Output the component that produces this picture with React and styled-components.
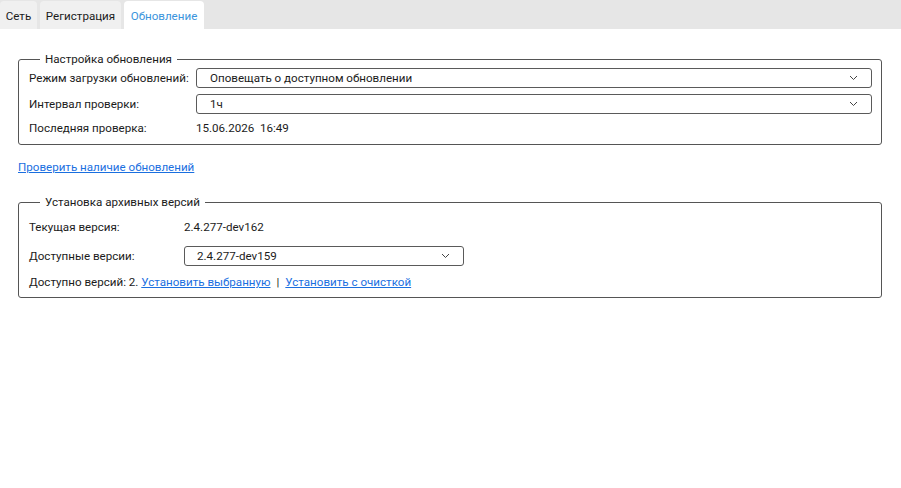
import React, { useState } from "react";
import styled, { createGlobalStyle } from "styled-components";

const Global = createGlobalStyle`
  html, body {
    margin: 0;
    padding: 0;
    background: #ffffff;
  }
  body {
    font-family: Roboto, "Noto Sans", sans-serif;
    font-size: 11.6px;
    color: #1b1b1b;
  }
`;

const TabBar = styled.div`
  display: flex;
  align-items: flex-end;
  gap: 3px;
  height: 29px;
  background: #e6e6e6;
`;

const Tab = styled.button`
  width: ${(p) => p.$w}px;
  height: 28px;
  padding: 1px 0 0;
  border: none;
  border-radius: 4px 4px 0 0;
  background: ${(p) => (p.$active ? "#ffffff" : "#f0f0f0")};
  color: ${(p) => (p.$active ? "#3a94dc" : "#1b1b1b")};
  font: inherit;
  cursor: pointer;
`;

const Content = styled.div`
  padding: 22px 19px 0 18px;
`;

const Group = styled.fieldset`
  margin: 0;
  padding: ${(p) => p.$pad};
  border: 1px solid #555555;
  border-radius: 3px;
  display: flex;
  flex-direction: column;
  gap: 6px;
`;

const Legend = styled.legend`
  margin-left: 11px;
  padding: 0 5px;
  line-height: 16px;
`;

const Row = styled.div`
  display: grid;
  grid-template-columns: ${(p) => p.$label}px ${(p) => p.$field || "1fr"};
  align-items: center;
  min-height: 16px;
  line-height: 16px;
  white-space: nowrap;
  margin-bottom: ${(p) => p.$after || 0}px;
`;

const Combo = styled.div`
  display: flex;
  align-items: center;
  justify-content: space-between;
  height: 18px;
  border: 1px solid #5a5a5a;
  border-radius: 3px;
  padding: 0 13px 0 ${(p) => p.$indent || 13}px;
  cursor: default;
`;

const Chevron = () => (
  <svg width="9" height="6" viewBox="0 0 9 6">
    <path d="M1 1 L4.5 4.5 L8 1" fill="none" stroke="#444" strokeWidth="1" />
  </svg>
);

const Link = styled.a`
  color: #1a6fdf;
  text-decoration: underline;
  cursor: pointer;
`;

const LinkLine = styled.div`
  margin: 14px 0 19px;
  line-height: 16px;
`;

const Sep = styled.span`
  margin: 0 6px;
`;

export default function App() {
  const [tab, setTab] = useState(2);
  const tabs = [
    { name: "Сеть", w: 37 },
    { name: "Регистрация", w: 81 },
    { name: "Обновление", w: 80 },
  ];
  return (
    <>
      <Global />
      <TabBar>
        {tabs.map((t, i) => (
          <Tab key={t.name} $w={t.w} $active={i === tab} onClick={() => setTab(i)}>
            {t.name}
          </Tab>
        ))}
      </TabBar>
      <Content>
        <Group $pad="1px 9px 8px 10px">
          <Legend>Настройка обновления</Legend>
          <Row $label={167}>
            <span>Режим загрузки обновлений:</span>
            <Combo $indent={13}>
              <span>Оповещать о доступном обновлении</span>
              <Chevron />
            </Combo>
          </Row>
          <Row $label={167}>
            <span>Интервал проверки:</span>
            <Combo $indent={13}>
              <span>1ч</span>
              <Chevron />
            </Combo>
          </Row>
          <Row $label={167}>
            <span>Последняя проверка:</span>
            <span>15.06.2026&nbsp;&nbsp;16:49</span>
          </Row>
        </Group>
        <LinkLine>
          <Link>Проверить наличие обновлений</Link>
        </LinkLine>
        <Group $pad="9px 9px 7px 10px">
          <Legend>Установка архивных версий</Legend>
          <Row $label={155} $after={5}>
            <span>Текущая версия:</span>
            <span>2.4.277-dev162</span>
          </Row>
          <Row $label={155} $field="280px" $after={2}>
            <span>Доступные версии:</span>
            <Combo $indent={12}>
              <span>2.4.277-dev159</span>
              <Chevron />
            </Combo>
          </Row>
          <Row $label={155}>
            <span style={{ gridColumn: "1 / 3" }}>
              Доступно версий: 2. <Link>Установить выбранную</Link>
              <Sep>|</Sep>
              <Link>Установить с очисткой</Link>
            </span>
          </Row>
        </Group>
      </Content>
    </>
  );
}
